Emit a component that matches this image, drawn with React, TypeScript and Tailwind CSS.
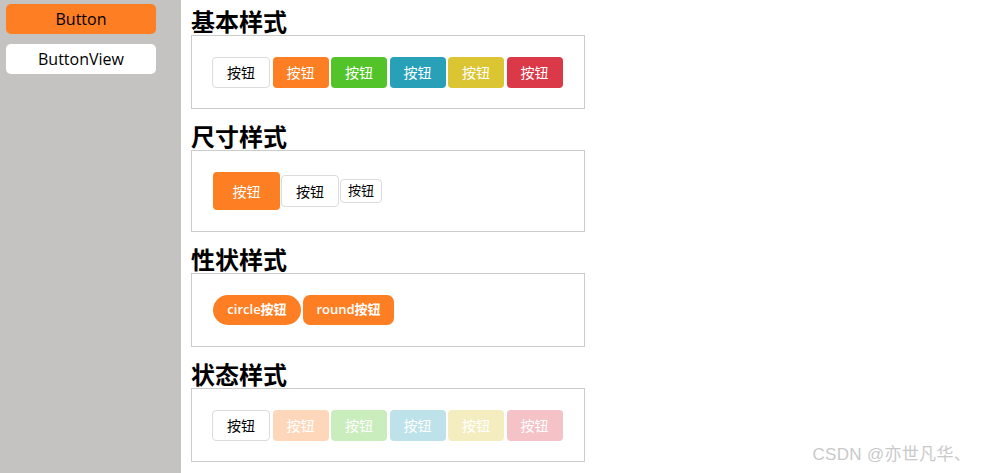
import type { ReactNode } from 'react';

const font = { fontFamily: '"Open Sans", "Noto Sans CJK SC", sans-serif' };

const basic = [
  { label: '按钮', cls: 'bg-white border border-[#dcdcdc] text-black w-[58px]' },
  { label: '按钮', cls: 'bg-[#fd7e23] text-white w-14' },
  { label: '按钮', cls: 'bg-[#52c42a] text-white w-14' },
  { label: '按钮', cls: 'bg-[#28a0b8] text-white w-14' },
  { label: '按钮', cls: 'bg-[#dcc532] text-white w-14' },
  { label: '按钮', cls: 'bg-[#db3848] text-white w-14' },
];

function Section({ title, first, children, row }: { title: string; first?: boolean; children: ReactNode; row: string }) {
  return (
    <section className={first ? '' : 'mt-[6px]'}>
      <h2 className="pt-[7px] text-[24px] font-bold leading-[28px] text-black" style={{ fontFamily: '"Noto Sans CJK SC", sans-serif' }}>
        {title}
      </h2>
      <div className="w-[394px] border border-[#cccccc] bg-white px-5 py-5">
        <div className={`flex items-center ${row}`}>{children}</div>
      </div>
    </section>
  );
}

export default function App() {
  return (
    <div className="relative flex h-[473px] w-full bg-white text-[14px]" style={font}>
      {/* Sidebar */}
      <aside className="w-[181px] shrink-0 bg-[#c4c3c1] px-[6px] pt-1">
        <button className="flex h-[30px] w-[150px] items-center justify-center rounded-[5px] bg-[#fd7e23] text-[16px] text-black">
          Button
        </button>
        <button className="mt-[10px] flex h-[30px] w-[150px] items-center justify-center rounded-[5px] bg-white text-[16px] text-black">
          ButtonView
        </button>
      </aside>

      {/* Main */}
      <main className="pl-[10px]">
        <Section title="基本样式" first row="h-8 gap-[2.5px]">
          {basic.map((b, i) => (
            <button key={i} className={`flex h-[31px] items-center justify-center rounded-[4px] text-[14px] ${b.cls}`}>
              {b.label}
            </button>
          ))}
        </Section>

        <Section title="尺寸样式" row="h-10 gap-px pl-px">
          <button className="flex h-[38px] w-[67px] items-center justify-center rounded-[4px] bg-[#fd7e23] text-[14px] text-white">
            按钮
          </button>
          <button className="flex h-[32px] w-[58px] items-center justify-center rounded-[4px] border border-[#dcdcdc] bg-white text-[14px] text-black">
            按钮
          </button>
          <button className="flex h-[24px] w-[42px] items-center justify-center rounded-[4px] border border-[#dcdcdc] bg-white text-[13px] text-black">
            按钮
          </button>
        </Section>

        <Section title="性状样式" row="h-8 gap-[2px] pl-px">
          <button className="flex h-[30px] w-[88px] items-center justify-center rounded-full bg-[#fd7e23] text-[13px] font-semibold text-white">
            circle按钮
          </button>
          <button className="flex h-[30px] w-[91px] items-center justify-center rounded-[7px] bg-[#fd7e23] text-[13px] font-semibold text-white">
            round按钮
          </button>
        </Section>

        <Section title="状态样式" row="h-8 gap-[2.5px]">
          {basic.map((b, i) => (
            <button
              key={i}
              disabled={i > 0}
              className={`flex h-[31px] items-center justify-center rounded-[4px] text-[14px] ${b.cls} ${i > 0 ? 'opacity-30' : ''}`}
            >
              {b.label}
            </button>
          ))}
        </Section>
      </main>

      <div className="absolute bottom-[6px] right-[10px] text-[17px] tracking-[0.3px] text-[#c9c9c9]" style={{ fontFamily: '"Liberation Sans", "Noto Sans CJK SC", sans-serif' }}>
        CSDN @亦世凡华、
      </div>
    </div>
  );
}
